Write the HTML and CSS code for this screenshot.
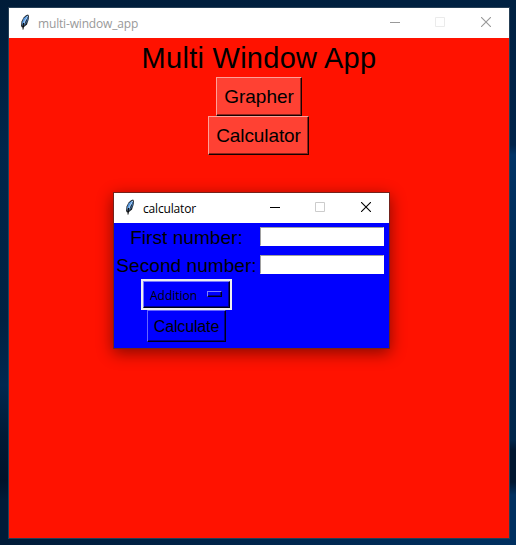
FILE: index.html
```html
<!DOCTYPE html>
<html lang="en">
<head>
<meta charset="utf-8">
<title>multi-window_app</title>
<link rel="stylesheet" href="styles.css">
</head>
<body>
<svg class="defs" aria-hidden="true">
  <symbol id="feather" viewBox="0 0 10 16">
    <path d="M8 .5Q9.6 1.5 8.5 6L7 10.5 3.5 13.5H2L1 12 1.5 7.5 3.5 3.5 6 1.2Z" fill="#22262b"/>
    <path d="M7.5 1.3 3.8 4.3 2.2 8V11L4 9.5 7.2 4Z" fill="#5c9be0"/>
    <path d="M7.8 2Q5 6 3 12" fill="none" stroke="#b9dcff" stroke-width=".9"/>
    <path d="M8 3 7.2 7 4 11.5" fill="none" stroke="#3769a0" stroke-width="1"/>
    <path d="M3.5 9 3 15.5" fill="none" stroke="#000" stroke-width="1"/>
  </symbol>
  <symbol id="minimize" viewBox="0 0 10 10"><path d="M0 5.5H10" stroke="currentColor"/></symbol>
  <symbol id="maximize" viewBox="0 0 10 10"><path d="M.5.5H9.5V9.5H.5Z" fill="none" stroke="currentColor"/></symbol>
  <symbol id="close" viewBox="0 0 10 10"><path d="M0 0 10 10M10 0 0 10" stroke="currentColor" stroke-width="1.1"/></symbol>
</svg>
<div class="desktop">
  <main class="window main-window">
    <header class="titlebar inactive">
      <svg class="app-icon"><use href="#feather"/></svg>
      <span class="caption">multi-window_app</span>
      <div class="controls">
        <svg><use href="#minimize"/></svg>
        <svg class="disabled"><use href="#maximize"/></svg>
        <svg><use href="#close"/></svg>
      </div>
    </header>
    <div class="main-content">
      <h1>Multi Window App</h1>
      <button class="raised grapher">Grapher</button>
      <button class="raised calculator">Calculator</button>
    </div>
  </main>
  <section class="window dialog">
    <header class="titlebar">
      <svg class="app-icon"><use href="#feather"/></svg>
      <span class="caption">calculator</span>
      <div class="controls">
        <svg><use href="#minimize"/></svg>
        <svg class="disabled"><use href="#maximize"/></svg>
        <svg><use href="#close"/></svg>
      </div>
    </header>
    <div class="form">
      <label for="first">First number:</label>
      <input id="first" type="text">
      <label for="second">Second number:</label>
      <input id="second" type="text">
      <div class="actions">
        <div class="option-ring"><button class="option"><span>Addition</span><i class="indicator"></i></button></div>
        <button class="calculate">Calculate</button>
      </div>
    </div>
  </section>
</div>
</body>
</html>
```
FILE: styles.css
```css
* { box-sizing: border-box; }

body {
  margin: 0;
  font-family: "Liberation Sans", Arial, sans-serif;
  color: #000;
}

.defs { position: absolute; width: 0; height: 0; }

.desktop {
  position: relative;
  width: 516px;
  height: 545px;
  padding: 7px 6px 6px 8px;
  overflow: hidden;
  background:
    linear-gradient(#001c39, #002142 75px, #00264b 150px, #002142 320px, #002850 385px, #001a36 435px, #00122a 480px, #001b38 500px, #001b38) left / 8px 100% no-repeat,
    linear-gradient(#002142, #00234a 145px, #003366 155px, #002850 300px, #00264b 440px, #001630 450px, #001630 482px, #003060 495px, #003060) right / 6px 100% no-repeat,
    linear-gradient(90deg, #001b38, #003060) bottom / 100% 6px no-repeat,
    linear-gradient(90deg, #001c39, #002142) top / 100% 7px no-repeat;
}

.window { display: flex; flex-direction: column; }

.main-window {
  width: 502px;
  height: 532px;
  border: 1px solid #263f56;
  background: #ff1200;
}

.titlebar {
  display: flex;
  align-items: center;
  height: 30px;
  flex: none;
  padding-left: 11px;
  background: #fff;
  font: 12px "Open Sans", "Noto Sans", sans-serif;
}

.inactive .caption,
.inactive .controls { color: #999; }

.app-icon { width: 10px; height: 16px; margin: -2px 8px 0 0; }
.caption { letter-spacing: -.17px; }

.controls {
  display: flex;
  gap: 36px;
  margin-left: auto;
  padding: 0 18px 2px 0;
}

.controls svg { display: block; width: 10px; height: 10px; }
.controls svg:first-child { margin-right: -1px; }
.controls .disabled { color: #ccc; }
.inactive .controls .disabled { color: #ebebeb; }

.main-content { display: flex; flex-direction: column; align-items: center; }

h1 {
  margin: 0;
  height: 39px;
  font-size: 29px;
  font-weight: 400;
  line-height: 40px;
  letter-spacing: .27px;
  white-space: nowrap;
}

button {
  margin: 0;
  padding: 0;
  border-radius: 0;
  font-family: inherit;
  color: #000;
  white-space: nowrap;
}

.raised {
  height: 39px;
  border: 1px solid;
  border-color: #ffa098 #180200 #180200 #ffa098;
  background: #ff4133;
  box-shadow: inset -1px -1px #8c231b;
  font-size: 19px;
}

.grapher { width: 86px; }
.calculator { width: 101px; margin-right: 1px; letter-spacing: -.1px; }

.dialog {
  position: absolute;
  left: 113px;
  top: 192px;
  width: 277px;
  height: 157px;
  border: 1px solid #74221b;
  background: #00f;
  box-shadow: 0 4px 15px rgba(0, 0, 0, .48);
}

.form {
  display: grid;
  grid-template-columns: 145px 124px;
  grid-template-rows: 28px 28px auto;
  column-gap: 1px;
}

.form label {
  display: flex;
  justify-content: center;
  font-size: 19px;
  line-height: 29px;
  letter-spacing: .06px;
  white-space: nowrap;
}

.form input {
  width: 124px;
  height: 19px;
  margin: 4px 0 0;
  padding: 0 2px;
  border: 1px solid;
  border-color: #a0a0a0 #fff #fff #a0a0a0;
  background: #fff;
}

.actions { display: flex; flex-direction: column; align-items: center; }

.option-ring { width: 91px; height: 31px; border: 2px solid #f0f0f0; }

.option {
  display: flex;
  align-items: center;
  justify-content: space-between;
  width: 100%;
  height: 100%;
  padding: 2px 7px 0 6px;
  border: 1px solid;
  border-color: #7a7aff #000018 #000018 #7a7aff;
  background: #00f;
  box-shadow: inset -1px -1px #00008c;
  font: 12px "Open Sans", "Noto Sans", sans-serif;
}

.indicator {
  width: 15px;
  height: 6px;
  margin-bottom: 3px;
  border: 1px solid;
  border-color: #8080ff #000018 #000018 #8080ff;
  box-shadow: inset -1px -1px #00008c;
}

.calculate {
  width: 79px;
  height: 32px;
  border: 1px solid;
  border-color: #6666ff #000018 #000018 #6666ff;
  background: #00f;
  box-shadow: inset -1px -1px #00008c;
  padding-top: 1px;
  font-size: 16px;
  letter-spacing: -.15px;
}
```
